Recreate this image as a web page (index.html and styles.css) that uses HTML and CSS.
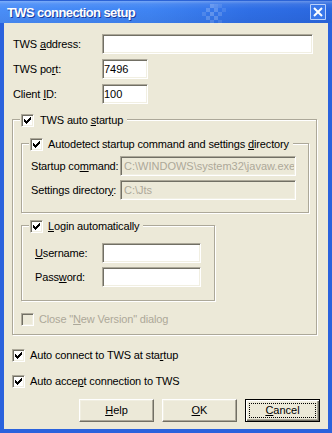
FILE: index.html
```html
<!DOCTYPE html>
<html>
<head>
<meta charset="utf-8">
<link rel="stylesheet" href="styles.css">
</head>
<body>
<div class="window">
  <div class="titlebar">
    <span class="title">TWS connection setup</span>
    <svg class="pattern" width="24" height="20" viewBox="0 0 24 20">
      <rect x="8" y="0" width="4" height="4" fill="#fff" opacity=".22"/>
      <rect x="12" y="0" width="4" height="4" fill="#fff" opacity=".16"/>
      <rect x="16" y="0" width="4" height="4" fill="#fff" opacity=".1"/>
      <rect x="4" y="4" width="4" height="4" fill="#fff" opacity=".2"/>
      <rect x="12" y="4" width="4" height="4" fill="#fff" opacity=".2"/>
      <rect x="20" y="4" width="4" height="4" fill="#fff" opacity=".1"/>
      <rect x="0" y="8" width="4" height="4" fill="#fff" opacity=".12"/>
      <rect x="8" y="8" width="4" height="4" fill="#fff" opacity=".22"/>
      <rect x="16" y="8" width="4" height="4" fill="#fff" opacity=".16"/>
      <rect x="4" y="12" width="4" height="4" fill="#fff" opacity=".18"/>
      <rect x="12" y="12" width="4" height="4" fill="#fff" opacity=".2"/>
      <rect x="8" y="16" width="4" height="4" fill="#fff" opacity=".14"/>
      <rect x="16" y="16" width="4" height="4" fill="#fff" opacity=".1"/>
    </svg>
    <span class="close">
      <svg width="10" height="10" viewBox="0 0 10 10"><path d="M1 1L9 9M9 1L1 9" stroke="#fff" stroke-width="2" fill="none"/></svg>
    </span>
  </div>
  <div class="frame">
    <div class="client">
      <div class="top-rows">
        <div class="row"><span class="lbl lbl-top">TWS <u>a</u>ddress:</span><input class="edit edit-addr" type="text" value=""></div>
        <div class="row"><span class="lbl lbl-top">TWS po<u>r</u>t:</span><input class="edit edit-small" type="text" value="7496"></div>
        <div class="row"><span class="lbl lbl-top">Client <u>I</u>D:</span><input class="edit edit-small" type="text" value="100"></div>
      </div>

      <div class="group group-auto">
        <div class="legend legend-wide">
          <span class="cb"><svg width="11" height="11" viewBox="0 0 11 11"><path d="M2 4h1v3H2zM3 5h1v3H3zM4 6h1v3H4zM5 5h1v3H5zM6 4h1v3H6zM7 3h1v3H7zM8 2h1v3H8z" fill="#000"/></svg></span>
          <span>TWS auto <u>s</u>tartup</span>
        </div>

        <div class="group group-detect">
          <div class="legend">
            <span class="cb"><svg width="11" height="11" viewBox="0 0 11 11"><path d="M2 4h1v3H2zM3 5h1v3H3zM4 6h1v3H4zM5 5h1v3H5zM6 4h1v3H6zM7 3h1v3H7zM8 2h1v3H8z" fill="#000"/></svg></span>
            <span>Autodetect startup command and settings <u>d</u>irectory</span>
          </div>
          <div class="row row-first"><span class="lbl lbl-detect">Startup co<u>m</u>mand:</span><input class="edit edit-path" type="text" value="C:\WINDOWS\system32\javaw.exe" disabled></div>
          <div class="row row-next"><span class="lbl lbl-detect">Settings director<u>y</u>:</span><input class="edit edit-path" type="text" value="C:\Jts" disabled></div>
        </div>

        <div class="group group-login">
          <div class="legend">
            <span class="cb"><svg width="11" height="11" viewBox="0 0 11 11"><path d="M2 4h1v3H2zM3 5h1v3H3zM4 6h1v3H4zM5 5h1v3H5zM6 4h1v3H6zM7 3h1v3H7zM8 2h1v3H8z" fill="#000"/></svg></span>
            <span><u>L</u>ogin automatically</span>
          </div>
          <div class="row row-login-first"><span class="lbl lbl-login"><u>U</u>sername:</span><input class="edit edit-login" type="text" value=""></div>
          <div class="row row-next"><span class="lbl lbl-login">Pass<u>w</u>ord:</span><input class="edit edit-login" type="password" value=""></div>
        </div>

        <div class="check check-disabled">
          <span class="cb cb-disabled"></span>
          <span>Close "<u>N</u>ew Version" dialog</span>
        </div>
      </div>

      <div class="check check-first">
        <span class="cb"><svg width="11" height="11" viewBox="0 0 11 11"><path d="M2 4h1v3H2zM3 5h1v3H3zM4 6h1v3H4zM5 5h1v3H5zM6 4h1v3H6zM7 3h1v3H7zM8 2h1v3H8z" fill="#000"/></svg></span>
        <span>Auto connect to TWS at sta<u>r</u>tup</span>
      </div>
      <div class="check check-second">
        <span class="cb"><svg width="11" height="11" viewBox="0 0 11 11"><path d="M2 4h1v3H2zM3 5h1v3H3zM4 6h1v3H4zM5 5h1v3H5zM6 4h1v3H6zM7 3h1v3H7zM8 2h1v3H8z" fill="#000"/></svg></span>
        <span>Auto acce<u>p</u>t connection to TWS</span>
      </div>

      <div class="buttons">
        <button class="btn" type="button"><u>H</u>elp</button>
        <button class="btn" type="button"><u>O</u>K</button>
        <button class="btn btn-default" type="button"><span class="focus"><u>C</u>ancel</span></button>
      </div>
    </div>
  </div>
</div>
</body>
</html>
```

FILE: styles.css
```css
* { box-sizing: border-box; }
html, body { margin: 0; padding: 0; background: #ece9d8; }
body {
  font-family: "Liberation Sans", Arial, sans-serif;
  font-size: 11px;
  line-height: 13px;
  letter-spacing: -0.15px;
  color: #000;
}
u { text-decoration: underline; text-underline-offset: 1px; }

.window { width: 332px; height: 433px; display: flex; flex-direction: column; }

.titlebar {
  position: relative;
  height: 23px;
  flex: none;
  display: flex;
  align-items: center;
  padding: 0 6px 0 7px;
  background:
    linear-gradient(to bottom, rgba(255,255,255,.28) 0, rgba(255,255,255,.08) 3px, rgba(255,255,255,0) 8px, rgba(0,0,40,.06) 23px),
    linear-gradient(to right, #4a8ef8 0, #3f84f3 45%, #2f6fe6 75%, #2a67df 100%);
  border-top: 1px solid #2b63d6;
}
.title {
  color: #fff;
  font-weight: bold;
  font-size: 13px;
  letter-spacing: -0.6px;
  text-shadow: 1px 1px 0 #1a3a9a;
  margin-top: 1px;
}
.pattern { position: absolute; left: 202px; top: 3px; }
.close {
  margin-left: auto;
  width: 16px;
  height: 16px;
  border: 1px solid rgba(230,238,255,.75);
  border-radius: 1px;
  display: flex;
  align-items: center;
  justify-content: center;
  background: #3a78ea;
}
.close svg { display: block; }

.frame {
  flex: 1;
  border: 4px solid #2a62dd;
  border-top: 0;
  box-shadow: inset 1px 0 0 #1548c8, inset -1px -1px 0 #1548c8;
}
.client {
  height: 100%;
  background: #ece9d8;
  padding: 11px 0 7px 9px;
}

.top-rows { display: flex; flex-direction: column; gap: 5px; }
.row { display: flex; align-items: center; }
.lbl { flex: none; white-space: nowrap; }
.lbl-top { width: 89px; }
.lbl-detect { width: 89px; margin-left: 1px; }
.lbl-login { width: 67px; margin-left: 5px; }

.edit {
  height: 20px;
  font: inherit;
  letter-spacing: 0;
  color: #000;
  padding: 0 1px;
  margin: 0;
  background: #fff;
  border: 1px solid;
  border-color: #aca899 #fff #fff #aca899;
  box-shadow: inset 1px 1px 0 #716f64, inset -1px -1px 0 #f1efe2;
  outline: none;
}
.edit:disabled { background: #ece9d8; color: #aca899; -webkit-text-fill-color: #aca899; opacity: 1; padding-left: 3px; }
.edit-addr { width: 211px; }
.edit-small { width: 46px; }
.edit-path { width: 176px; }
.edit-login { width: 99px; }

.group {
  border: 1px solid #aca899;
  box-shadow: 1px 1px 0 #fff, inset 1px 1px 0 #fff;
  padding: 0 8px;
}
.group-auto { width: 305px; height: 216px; margin: 15px 0 0 -1px; }
.group-detect { width: 288px; height: 70px; margin-top: 16px; }
.group-login { width: 194px; height: 76px; margin-top: 12px; }

.legend {
  display: flex;
  align-items: center;
  gap: 5px;
  width: fit-content;
  height: 13px;
  margin: -6px 0 0 -1px;
  padding: 0 4px 0 1px;
  background: #ece9d8;
  white-space: nowrap;
}
.legend-wide { gap: 6px; }

.row-first { margin-top: 5px; }
.row-next { margin-top: 4px; }
.row-login-first { margin-top: 10px; }

.cb {
  flex: none;
  width: 13px;
  height: 13px;
  display: inline-block;
  background: #fff;
  border: 1px solid;
  border-color: #aca899 #fff #fff #aca899;
  box-shadow: inset 1px 1px 0 #716f64, inset -1px -1px 0 #f1efe2;
}
.cb svg { display: block; }
.cb-disabled { background: #ece9d8; }

.check { display: flex; align-items: center; gap: 5px; height: 13px; white-space: nowrap; }
.check-disabled { margin-top: 12px; color: #aca899; }
.check-first { margin: 14px 0 0 -1px; }
.check-second { margin: 13px 0 0 -1px; }

.buttons {
  display: flex;
  justify-content: flex-end;
  gap: 8px;
  margin-top: 11px;
  padding-right: 8px;
}
.btn {
  width: 75px;
  height: 23px;
  margin: 0;
  padding: 0;
  font: inherit;
  color: #000;
  background: #ece9d8;
  border: 1px solid;
  border-color: #fff #716f64 #716f64 #fff;
  box-shadow: inset -1px -1px 0 #aca899, inset 1px 1px 0 #f1efe2;
  display: flex;
  align-items: center;
  justify-content: center;
}
.btn-default {
  border: 1px solid #000;
  box-shadow: inset 1px 1px 0 #fff, inset -1px -1px 0 #716f64, inset -2px -2px 0 #aca899, inset 2px 2px 0 #f1efe2;
}
.focus {
  width: 67px;
  height: 15px;
  border: 1px dotted #000;
  display: flex;
  align-items: center;
  justify-content: center;
}
```
